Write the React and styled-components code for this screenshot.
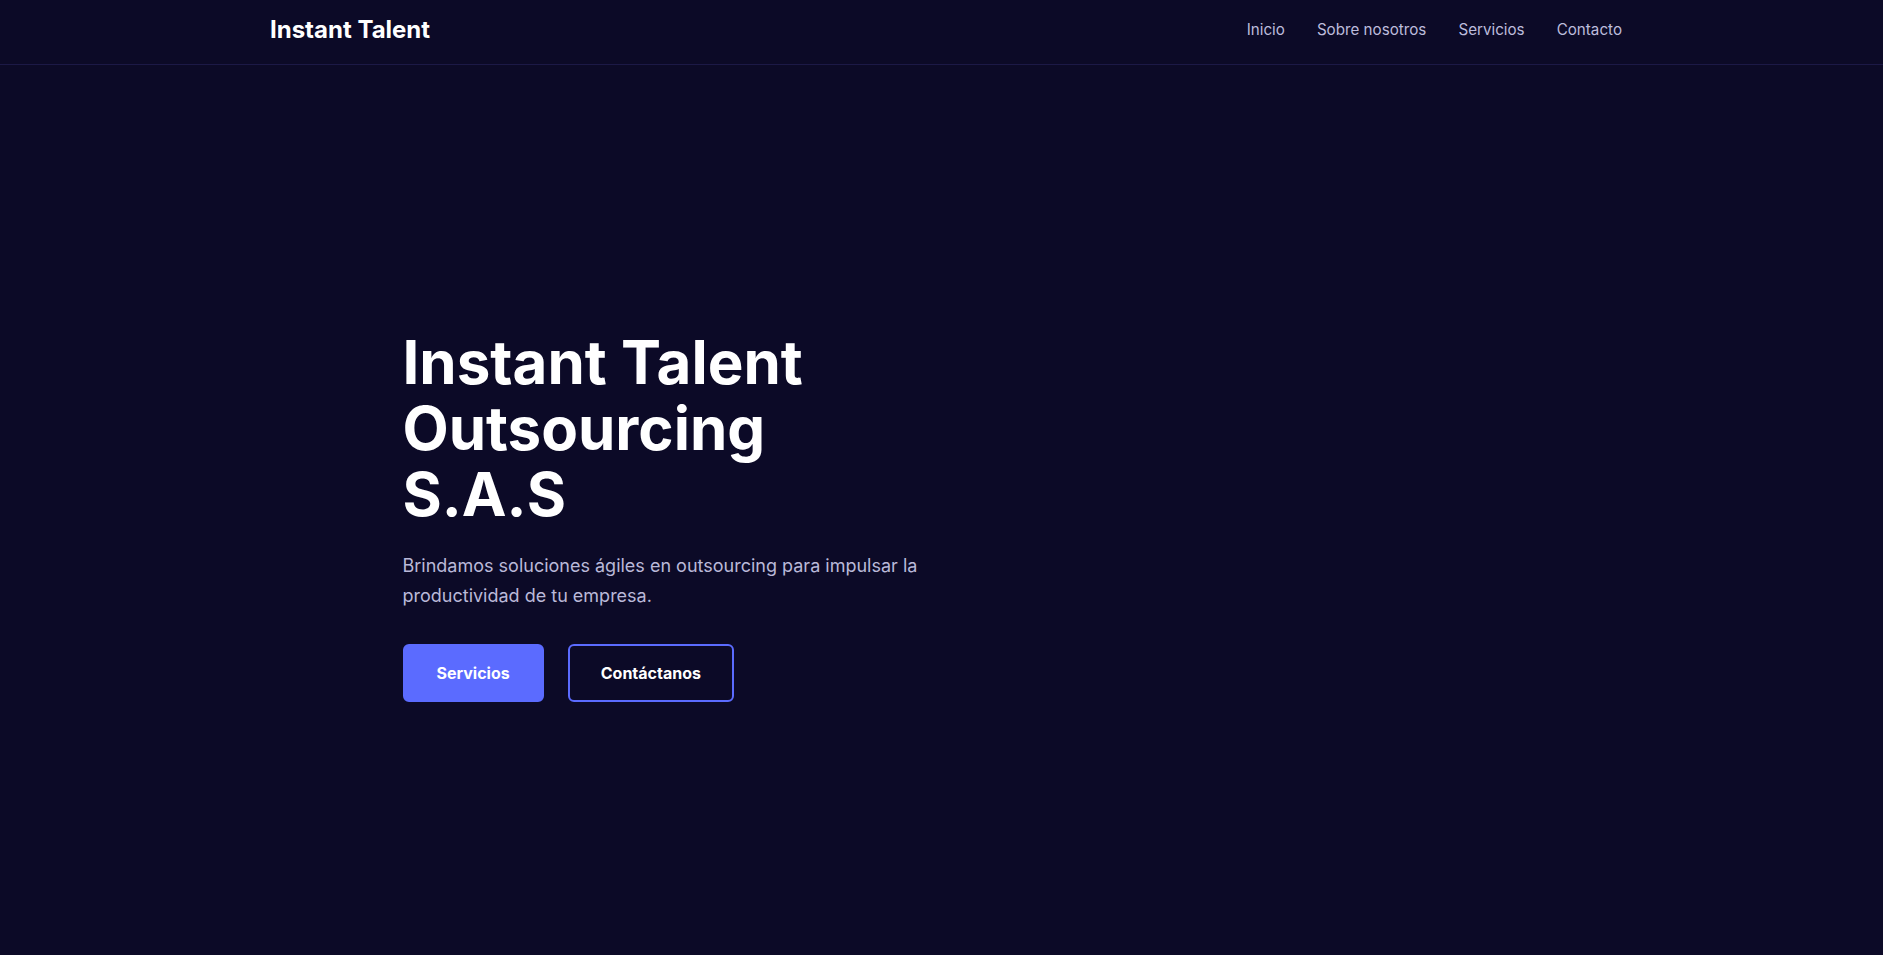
import React from "react";
import styled, { createGlobalStyle } from "styled-components";

const GlobalStyle = createGlobalStyle`
  * { box-sizing: border-box; }
  html, body { margin: 0; padding: 0; }
  body {
    background: #0c0a27;
    font-family: Inter, "Noto Sans", sans-serif;
    color: #ffffff;
    -webkit-font-smoothing: antialiased;
  }
`;

const Header = styled.header`
  border-bottom: 1px solid #1c1946;
  background: #0c0a27;
  padding-left: 9px;
`;

const NavBar = styled.nav`
  max-width: 1352px;
  margin: 0 auto;
  padding: 12px 0 16px;
  display: flex;
  align-items: center;
  justify-content: space-between;
`;

const Logo = styled.a`
  font-size: 24px;
  line-height: 36px;
  font-weight: 700;
  color: #ffffff;
  text-decoration: none;
`;

const Menu = styled.ul`
  list-style: none;
  margin: 0;
  padding: 0;
  display: flex;
  gap: 32px;
`;

const MenuLink = styled.a`
  font-size: 15.2px;
  line-height: 36px;
  color: #bdbcdc;
  text-decoration: none;
`;

const Hero = styled.section`
  min-height: calc(100vh - 65px);
  display: flex;
  align-items: center;
  padding-top: 10px;
`;

const HeroInner = styled.div`
  width: 1078px;
  margin: 0 auto;
`;

const Title = styled.h1`
  max-width: 460px;
  margin: 0 0 24px;
  font-size: 60px;
  line-height: 66px;
  font-weight: 700;
  color: #ffffff;
`;

const Lead = styled.p`
  max-width: 520px;
  margin: 0 0 33px;
  font-size: 18px;
  line-height: 30px;
  color: #bab9d9;
`;

const Actions = styled.div`
  display: flex;
  gap: 24px;
`;

const Button = styled.a`
  display: inline-flex;
  align-items: center;
  justify-content: center;
  height: 58px;
  padding: 0 ${(p) => (p.$outline ? "31px" : "32px")};
  border-radius: 6px;
  border: 2px solid #5b6bff;
  background: ${(p) => (p.$outline ? "transparent" : "#5b6bff")};
  color: #ffffff;
  font-size: 16px;
  font-weight: 700;
  text-decoration: none;
`;

export default function App() {
  return (
    <>
      <GlobalStyle />
      <Header>
        <NavBar>
          <Logo href="#">Instant Talent</Logo>
          <Menu>
            <li><MenuLink href="#">Inicio</MenuLink></li>
            <li><MenuLink href="#">Sobre nosotros</MenuLink></li>
            <li><MenuLink href="#">Servicios</MenuLink></li>
            <li><MenuLink href="#">Contacto</MenuLink></li>
          </Menu>
        </NavBar>
      </Header>
      <Hero>
        <HeroInner>
          <Title>Instant Talent Outsourcing S.A.S</Title>
          <Lead>
            Brindamos soluciones ágiles en outsourcing para impulsar la
            productividad de tu empresa.
          </Lead>
          <Actions>
            <Button href="#">Servicios</Button>
            <Button href="#" $outline>Contáctanos</Button>
          </Actions>
        </HeroInner>
      </Hero>
    </>
  );
}
